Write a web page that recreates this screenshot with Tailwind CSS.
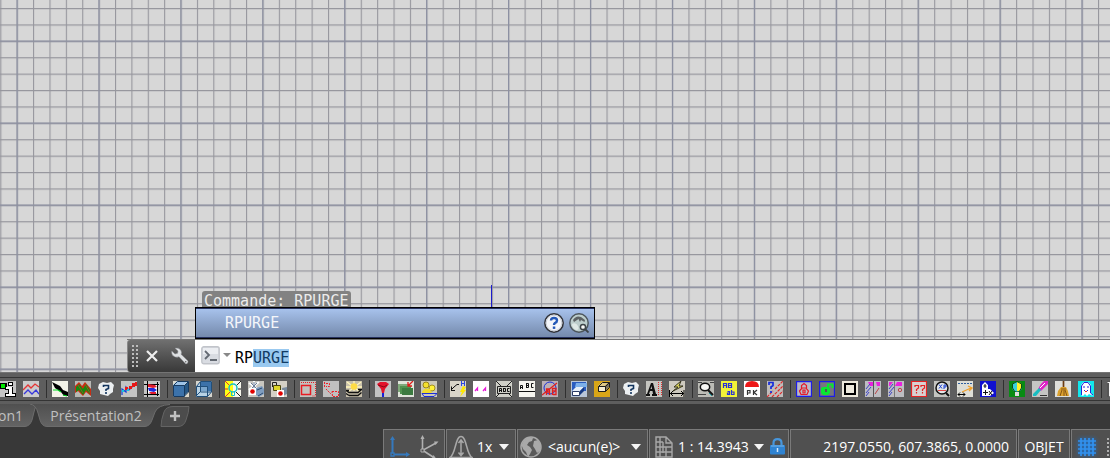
<!DOCTYPE html>
<html lang="fr">
<head>
    <meta charset="UTF-8">
    <meta name="viewport" content="width=device-width, initial-scale=1.0">
    <title>Dessin - Présentation2</title>
    <script src="https://cdn.jsdelivr.net/npm/@tailwindcss/browser@4"></script>
</head>
<body class="bg-white font-['Open_Sans',sans-serif] overflow-hidden">
<div class="flex flex-col h-screen pb-[9px]">

    <!-- Drawing area -->
    <main class="relative flex-1 min-h-0 flex flex-col justify-end bg-[#d7d7d7] overflow-hidden">
        <svg class="absolute inset-0 w-full h-full" aria-hidden="true">
            <defs>
                <pattern id="minor" width="16.384" height="16.4" x="0.3" y="8" patternUnits="userSpaceOnUse">
                    <path d="M.5 0V16.4M0 .5H16.4" stroke="#96969d" stroke-width="1.2"/>
                </pattern>
                <pattern id="major" width="81.92" height="82" x="16.5" y="40.5" patternUnits="userSpaceOnUse">
                    <path d="M.6 0V82M0 .6H82" stroke="#8c90a2" stroke-width="1.2"/>
                </pattern>
            </defs>
            <rect width="100%" height="100%" fill="url(#minor)"/>
            <rect width="100%" height="100%" fill="url(#major)"/>
        </svg>
        <div class="absolute left-[491px] bottom-[65px] w-px h-[22px] bg-[#1c1ccc]"></div>

        <!-- Command line -->
        <div class="relative pl-[127px] font-['DejaVu_Sans_Mono',monospace] text-[15px]">
            <div class="ml-[75px] w-[149px] h-4 pl-[2px] rounded-t-[3px] bg-[#828282] text-[#ececec] leading-[20px] whitespace-pre">Commande: RPURGE</div>
            <div class="relative ml-[68px] w-[400px] h-8 flex items-center pl-[29px] pr-[5px] border border-black bg-linear-to-b from-[#a9c4ee] to-[#7388aa] text-[#f4f6fa] shadow-[inset_0_1px_#25305f,inset_0_-1px_#25305f]">
                <span class="flex-1 pt-px">RPURGE</span>
                <button class="w-5 h-5 mr-[5px] -mt-px" aria-label="Aide">
                    <svg viewBox="0 0 20 20" width="20" height="20"><circle cx="10" cy="10" r="9.2" fill="#f4f6fa" stroke="#303238" stroke-width="1.5"/><circle cx="10" cy="10" r="7.8" fill="none" stroke="#c9ced6"/><path d="M7 7.6Q7 5 10 5T13 7.4Q13 9 11 10Q10 10.7 10 12" fill="none" stroke="#2459b8" stroke-width="2.4"/><path d="M8.8 13.5h2.5v2.4h-2.5z" fill="#2459b8"/></svg>
                </button>
                <button class="w-5 h-5 -mt-px" aria-label="Rechercher sur Internet">
                    <svg viewBox="0 0 20 20" width="20" height="20"><circle cx="10" cy="10" r="9.2" fill="#bccdcb" stroke="#4c555b" stroke-width="1.4"/><path d="M4 7Q7 2 12 4L16 7 15.500 9 12 7 11 9 9.500 6 5 9z" fill="#5d6264"/><path d="M3 11Q7 9 9 13T7 17Q3 15 3 11" fill="#dfe9e6"/><circle cx="14" cy="14" r="2.600" fill="#f8faf8" stroke="#3c4347" stroke-width="1.5"/><path d="M16 16l3.5 3.5" stroke="#3c4347" stroke-width="1.8"/></svg>
                </button>
            </div>
            <div class="flex h-[33px] border-t border-[#777777]">
                <div class="flex items-center w-[68px] pl-[4px] rounded-l-[3px] border-l border-[#888888] bg-linear-to-b from-[#707070] to-[#393939]">
                    <svg viewBox="0 0 6 22" width="6" height="22" fill="#bdbdbd" shape-rendering="crispEdges" aria-hidden="true"><path d="M0 0h2v2H0zM4 0h2v2H4zM0 4h2v2H0zM4 4h2v2H4zM0 8h2v2H0zM4 8h2v2H4zM0 12h2v2H0zM4 12h2v2H4zM0 16h2v2H0zM4 16h2v2H4zM0 20h2v2H0zM4 20h2v2H4z"/></svg>
                    <button class="ml-2 w-3 h-3" aria-label="Fermer">
                        <svg viewBox="0 0 12 12" width="12" height="12"><path d="M1 1l10 10M11 1L1 11" stroke="#eeeeee" stroke-width="2.2"/></svg>
                    </button>
                    <button class="ml-[13px] w-[18px] h-[18px]" aria-label="Personnaliser">
                        <svg viewBox="0 0 18 18" width="18" height="18"><path d="M4 1.2Q8 0 10 3.4 11 5.6 10 7.2L17 14Q17.4 16.5 14.8 17L8 9.7Q4.500 11.200 1.500 8.300 .2 6 .8 4L4 7 6.600 6.300 7 4z" fill="#dfe1e3" stroke="#8b8d90" stroke-width=".5"/><circle cx="14.700" cy="14.700" r=".8" fill="#666666"/></svg>
                    </button>
                </div>
                <div class="flex flex-1 items-center bg-white pl-[6px]">
                    <button class="flex items-center" aria-label="Commandes récentes">
                        <svg viewBox="0 0 31 20" width="31" height="20"><rect x=".8" y=".8" width="17.400" height="17" rx="2" fill="#d9dce2" stroke="#c1c4ca" stroke-width="1.4"/><path d="M2 2h15v6H2z" fill="#eceef2"/><path d="M4 5l4 4-4 4M9 14h7" fill="none" stroke="#636972" stroke-width="1.8"/><path d="M22 7h8l-4 4z" fill="#888888"/></svg>
                    </button>
                    <label for="cmd" class="sr-only">Commande</label>
                    <input id="cmd" value="RPURGE" spellcheck="false" autocomplete="off" class="flex-1 ml-[3px] h-7 pt-[3px] leading-[19px] text-black outline-none selection:bg-[#99c9f0] selection:text-[#123b63]">
                </div>
            </div>
        </div>
    </main>

    <!-- Tool palette -->
    <div class="pt-1 pb-[3px] bg-[#5e5e5e] border-t border-[#747474]">
        <div id="toolbar" role="toolbar" class="flex py-[2px] border-y border-[#343434]"></div>
    </div>

    <!-- Layout tabs -->
    <nav class="relative flex h-[25px] shrink-0 bg-[#383838] text-[14px] leading-[22px] text-[#c0c0c0]">
        <svg class="absolute inset-0" width="200" height="25" aria-hidden="true">
            <defs><linearGradient id="tab" x2="0" y2="1"><stop stop-color="#505050"/><stop offset="1" stop-color="#646464"/></linearGradient></defs>
            <path d="M0 0H37Q35 3 34 8L32 16Q30 22 25 22.500H0z" fill="url(#tab)"/>
            <path d="M37 0Q35 3 34 8L32 16Q30 22 25 22.500H0" fill="none" stroke="#6c6c6c"/>
            <path d="M30 0Q36 1 38 9L40 16Q42 22.500 47 22.500H145Q150 22 152 16L155 8Q158 1 170 0z" fill="url(#tab)"/>
            <path d="M30 0Q36 1 38 9L40 16Q42 22.500 47 22.500H145Q150 22 152 16L155 8Q158 1 170 .5" fill="none" stroke="#6c6c6c"/>
            <path d="M173 2.500H189Q189 8 186 16 184 22.500 178 22.500H161Q161 16 164 8 166 2.500 173 2.500z" fill="#4c4c4c" stroke="#646464"/>
        </svg>
        <button class="relative w-9 pb-px text-left"><span class="block -ml-[2px]">on1</span></button>
        <button class="relative w-[120px] pb-px">Présentation2</button>
        <button class="relative ml-[11px] w-4 h-6 flex justify-center items-center" aria-label="Nouvelle présentation">
            <svg viewBox="0 0 10 10" width="10" height="10"><path d="M5 0v10M0 5h10" stroke="#c0c0c0" stroke-width="2.4"/></svg>
        </button>
    </nav>

    <!-- Status bar -->
    <footer class="flex shrink-0 justify-end h-[29px] bg-[#383838] text-[14px] text-white overflow-hidden">
        <div class="flex flex-none gap-px w-[727px] bg-[#3e3e3e] *:flex *:items-center *:shrink-0 *:pt-[5px] *:bg-[#505050] *:border-t *:border-x *:border-[#7a7a7a] *:whitespace-nowrap">
            <div class="w-[62px] gap-[9px] pl-1">
                <button aria-label="SCU"><svg viewBox="0 0 22 24" width="22" height="24"><path d="M4.500 3v16.500H20" fill="none" stroke="#3579bd" stroke-width="2"/><path d="M2 5l2.500-4 2.500 4zM18 17l4 2.500-4 2.500z" fill="#3579bd"/><path d="M3 18h3v3H3z" fill="#505050" stroke="#3579bd" stroke-width="1.300"/></svg></button>
                <button aria-label="SCU dynamique"><svg viewBox="0 0 20 24" width="20" height="24"><path d="M3.500 2v13.500L17 8M4 15.500L14 22" fill="none" stroke="#b0b0b0" stroke-width="1.600"/><path d="M1.500 4l2-4 2 4zM15 6.500l4.500 0-3 3.500zM13 23l1.500-3 3 4z" fill="#b0b0b0"/><path d="M2 14h3v3H2z" fill="#505050" stroke="#b0b0b0"/></svg></button>
            </div>
            <div class="w-[70px] pl-[2px]">
                <button class="flex items-center gap-1"><svg viewBox="0 0 24 24" width="24" height="24" fill="none" stroke="#a8a8a8" stroke-width="1.500"><path d="M1 22.500C7 19 6 1.500 12 1.500S17 19 23 22.500zM12 6v14M9.500 8L12 5l2.500 3M9.500 17.500l2.500 3 2.500-3"/></svg>1x<svg class="ml-[3px]" viewBox="0 0 10 6" width="10" height="6"><path d="M0 0h10L5 6z" fill="#f4f4f4"/></svg></button>
            </div>
            <div class="w-[131px] pl-[2px]">
                <button class="flex items-center gap-[6px]"><svg viewBox="0 0 22 22" width="22" height="22"><circle cx="11" cy="11" r="10" fill="#5a5a5a" stroke="#a9a9a9" stroke-width="1.500"/><path d="M4 4Q9 0 13 2L12 5 9 6 7 9 10 11 12 14 10 18 8 21 6 16 3 13 1.500 9zM14 5L18 4 21 9 20 15 17 17 15 13 13 10z" fill="#a9a9a9"/></svg>&lt;aucun(e)&gt;<svg class="ml-[5px]" viewBox="0 0 10 6" width="10" height="6"><path d="M0 0h10L5 6z" fill="#f4f4f4"/></svg></button>
            </div>
            <div class="w-[140px] pl-[5px] gap-[6px]">
                <button class="flex items-center gap-[5px]"><svg viewBox="0 0 18 22" width="18" height="22" fill="none" stroke="#a8a8a8" stroke-width="1.400"><path d="M1 1h10l6 6v14H1zM11 1v6h6M5 1v20M1 6h7M1 11h16M11 11v10M1 16h16M8 6v11"/></svg>1 : 14.3943<svg viewBox="0 0 10 6" width="10" height="6"><path d="M0 0h10L5 6z" fill="#f4f4f4"/></svg></button>
                <button aria-label="Verrouiller l'échelle"><svg viewBox="0 0 15 17" width="15" height="17"><path d="M3.500 8V5Q3.500 1.200 7.500 1.200T11.500 5V8" fill="none" stroke="#4796dc" stroke-width="2.200"/><rect y="7" width="15" height="9.500" rx="1" fill="#2f83d2"/><path d="M1 8h13" stroke="#79b8ed"/><path d="M7.500 10v4" stroke="#d5e8fa" stroke-width="1.500"/></svg></button>
            </div>
            <div class="w-[227px] justify-end pr-[7px]">2197.0550, 607.3865, 0.0000</div>
            <div class="w-[52px] justify-center"><button>OBJET</button></div>
            <div class="flex-1 pl-[6px] gap-[11px]">
                <button class="drop-shadow-[0_0_2px_#1774d8]" aria-label="Grille"><svg viewBox="0 0 18 20" width="18" height="20"><path d="M3 1v18M7 1v18M11 1v18M15 1v18M0 4h18M0 8h18M0 12h18M0 16h18" stroke="#3292ef" stroke-width="1.700"/></svg></button>
                <button aria-label="Accrochage"><svg viewBox="0 0 18 20" width="18" height="20"><path d="M0 2h18M0 6h18M0 10h18M0 14h18M0 18h18" stroke="#b0b0b0" stroke-width="2" stroke-dasharray="2 2"/></svg></button>
            </div>
        </div>
    </footer>
</div>

<script>
    const bg = (c) => `<path d="M0 0h16v16H0z" fill="${c}"/>`;
    const line = (c, d, w = 1) => `<path d="${d}" fill="none" stroke="${c}" stroke-width="${w}"/>`;
    const fill = (c, d) => `<path d="${d}" fill="${c}"/>`;
    const cloud = fill("#eceff1", "M1 3L5 1 9 2 13 1 16 4 15 8 15 11 12 13 10 15 6 14 2 13 2 10 0 7z")
        + line("#12345e", "M5.500 6V4.500H10.500V7.500L8 8.500V10M8 11V13", 1.6);

    // one entry per group, every icon is [label, drawing]
    const groups = [
        [
            ["Info point", bg("#c4c4c4") + fill("#000", "M0 2h7v6H0zM8 1h5v4H8zM5 6h8v6h3v4H5v-4h3V9H5z") + fill("#00e800", "M1 3h4v4H1z") + fill("#fff", "M9 2h3v2H9zM6 6h6v7h3v2H6v-2h3V8H6z")],
            ["Profils", bg("#cbcbcb") + line("#e43434", "M0 9L5 4 8 7 12 3 16 6", 1.3) + line("#3737dc", "M1 13L5 9 9 13 13 9 16 13", 1.3)],
        ],
        [
            ["Talus", bg("#f3f3e8") + fill("#000", "M0 1L4 3 8 5 11 9 16 11V15L12 15 9 11 6 9 3 7z") + line("#00d820", "M1 9H6L9 11M11 14L15 15", 1.2)],
            ["Relief", bg("#b8b8b4") + fill("#cc2b12", "M0 5L4 1 7 5 10 1 16 8V15L11 11 8 15 3 10 0 12z") + fill("#188a10", "M1 6L4 3 8 8 11 3 15 9V13L11 9 8 14 4 9 1 11z") + line("#8c5a20", "M3 4L8 12M10 3L15 12")],
            ["Aide", cloud],
            ["Courbe", bg("#c4c4c4") + line("#1740d8", "M1 14V8L5 11V6L8 9L12 5H14", 1.2) + fill("#e81818", "M4 6h3v3H4zM8 5h3v3H8zM11 2h3v4h-3zM14 1h2v4h-2z") + fill("#13cce0", "M1 9h2v2H1zM6 8h2v2H6z")],
            ["Cadre", bg("#c4c4c4") + line("#000", "M0 3.500H15M0 13.500H15M3.500 0V16M13.500 1V15") + fill("#fff", "M4 4h9v8H4z") + fill("#e21b2d", "M4 3L11 4 13 6 9 7 4 6zM5 11H12V13H7z") + fill("#2028e0", "M4 7L10 7 13 9 10 11 5 10z")],
        ],
        [
            ["Solide", bg("#ddd9cc") + fill("#3c72aa", "M0 5h11v10H0z") + fill("#9dc3e8", "M0 4L4 0H15L11 4z") + fill("#275886", "M11 5L15 1V11L11 15z") + line("#173a60", "M.5 4.500H11.500V15.500H.5zM.5 4.500L4.500.5H15.500V11L11.500 15M11.500 4.500L15.500.5")],
            ["Vue filaire", bg("#d6d5ce") + fill("#b9d2e5", "M0 5L4 1H15V11L11 15H0z") + fill("#3c72aa", "M5 1H15V10H5z") + fill("#7ba6cd", "M5 5H11V10H5z") + line("#214f7a", "M.5 5.500H11.500V15.500H.5zM.5 5.500L4.500.5H15.500V11L11.500 15.500M4.500 1V11H15M0 15L4 11")],
        ],
        [
            ["Calque actif", bg("#f6f6ec") + fill("#ffff14", "M0 0h8v16H0z") + line("#e03030", "M0 0L5 5M0 8H3M0 16L5 11") + line("#222", "M16 0L11 5M16 16L11 11M13 8H16") + `<circle cx="8" cy="7" r="4" fill="none" stroke="#16bfc6" stroke-width="1.500"/>` + line("#16bfc6", "M6.500 11V14.500H9.500V11")],
            ["Geler le calque", bg("#c8c6c0") + line("#fff", "M6 0V11M1 2L11 9M11 1L1 9", 2) + line("#6b7d99", "M6 1V8M3 2L9 8M9 2L3 8") + fill("#7f9dc0", "M8 7L14 5 16 8V13L11 16 8 14z") + line("#2d4c70", "M9 9L14 7M10 15L15 12") + fill("#fff", "M1 7h7v7H1z") + `<circle cx="4.500" cy="10.500" r="2.300" fill="#e00000"/>`],
            ["Déverrouiller", bg("#d4d0c6") + line("#222", "M1.500 6V1.500H5.500V4") + fill("#ded629", "M3 4h6v5H3z") + line("#4c480c", "M2.500 4.500H9.500V9.500H2.500z") + fill("#77899d", "M11 7L16 6V13L12 15z") + fill("#fff", "M6 9h7v7H6z") + `<circle cx="9.500" cy="12.500" r="2.300" fill="#e00000"/>`],
        ],
        [
            ["Zone", bg("#c4c2be") + line("#e81c24", "M1.500 4.500H10.500V13.500H1.500z", 1.5) + `<path d="M1 1.500H15.500V15H12" fill="none" stroke="#e81c24" stroke-dasharray="1 1"/>`],
            ["Copie de zone", bg("#c0c0c0") + `<path d="M1.500 1V6M3 2.500H6.500V5.500H3M3 8L8 13M9 10.500H15.500V15.500H9.500z" fill="none" stroke="#ef2028" stroke-dasharray="2 1"/>`],
            ["Éclairer", bg("#c8c0ab") + line("#fff6bb", "M8 0V10M1 1L14 11M15 1L2 11M0 6H16", 1.3) + `<circle cx="8" cy="5.500" r="3.300" fill="#ffdc45"/>` + line("#111", "M0 9.500H3M12 8.500H15.500L12 11.500H3L0 9.500M3 14.500H12L15.500 11.500M0 12.500L3 14.500", 1.3)],
        ],
        [
            ["Cône", bg("#c2c2c2") + fill("#e3122b", "M2 3L5 1H11L14 3 10 8 9 12H7L6 8z") + line("#8a0716", "M3 4L9 6 12 4") + fill("#1720d6", "M7 12h2v4H7z")],
            ["Fenêtres", bg("#dfe5da") + fill("#80aa7b", "M0 3h11v8H0z") + fill("#50924f", "M2 5h11v8H2z") + fill("#3c7b40", "M4 7h11v7H4z") + line("#e11b1b", "M15 0L10 5M10 1V5H14", 1.3)],
            ["Groupe", bg("#ccc9b9") + `<circle cx="5" cy="4" r="3" fill="#f4e02e" stroke="#9a861a"/><circle cx="11" cy="7" r="3" fill="#fff23a" stroke="#a5921e"/>` + fill("#f1dd2c", "M1 11Q3 6 9 8L11 12H1z") + line("#1c2fd8", "M1 12.500H16L13 15.500H3z")],
        ],
        [
            ["Repère rapide", bg("#d8d4c8") + line("#111", "M1 9L4 6L7 3.500H9M1.500 9.500V5.500M1 9.500H5") + line("#2c46e0", "M11.500 0V5M14.500 0V5M12 2.500H15") + fill("#ffe900", "M13 5L16 6 14 9H16L10 16 12 11H10z")],
            ["Texte A A", bg("#fff") + line("#e818d8", "M2 10L4.500 7V10M4 9H5M10 10L12.500 7V10M12 9H13", 1.3)],
            ["Cadre ABC", bg("#cfcfc8") + line("#222", "M0 0L5 5M16 0L11 5M0 16L4 12M16 16L12 12M1.500 5.500H14.500V12.500H1.500z") + line("#111", "M3.500 11V7.500H5.500V11M3.500 9.500H5M7.500 7V11M7.500 7.500H9.500V10.500H7.500M13.500 7.500H11.500V10.500H13.500")],
            ["Ligne ABC", bg("#f5f4ee") + line("#111", "M1.500 8V4.500H3.500V8M1.500 6.500H3M7.500 2V7M7.500 2.500H9.500V4.500H7.500M7.500 6.500H9.500V4M14.500 2.500H12.500V6.500H14.500M0 10.500H16")],
            ["Rotation AB", bg("#b9b0b7") + `<circle cx="8" cy="7" r="6" fill="none" stroke="#1c30d8"/>` + line("#e02020", "M4.500 14V8H7.500V14M4.500 11H7M10.500 7V14M10.500 7.500H14V10H11M14 10.500V13.500H11M0 14L15 2", 1.3)],
        ],
        [
            ["Gomme bleue", bg("#b9c6d8") + fill("#2a5cc0", "M1 1h14v9H1z") + fill("#7db0ea", "M5 2h11v4H4z") + fill("#e6eef8", "M1 10L5 6H13L9 10z") + fill("#fff", "M2 10H9V14H2z") + fill("#173a82", "M9 10L13 6V10L9 14z") + line("#2b3c66", "M1.500 10.500H8.500V14.500H1.500z")],
            ["Effacer bloc", bg("#d9a617") + fill("#dfc987", "M4 5L8 1H16L11 5z") + fill("#77705e", "M11 5L15 1V6L11 10z") + fill("#f4ecd0", "M5 6H11V10H5z") + line("#1c1c1c", "M4.500 5.500H11.500V10.500H4.500zM4.500 5.500L8.500 1.500H15.500L11.500 5.500M15.500 1.500V6.500L11.500 10.500")],
        ],
        [
            ["Aide texte", cloud],
            ["Style A", bg("#c5c5c0") + fill("#111", "M0 13H1L5 2H7L10 13H11V15H6V13H7L6.500 10H4L3 13H4V15H0zM4.500 8H6L5.500 5z") + `<path d="M12.500 1V15M15.500 1V15" stroke="#e22b2b" stroke-dasharray="1 1"/>`],
            ["Cote éclair", bg("#cecabf") + fill("#e2db60", "M12 0L5 6H9L4 10L14 5H10z") + line("#35331e", "M12 0L5 6H9L4 10L14 5H10z") + line("#000", "M.5 9V16M15 9V16M1 12.500H15M4 10L1.500 12.500L4 15M12 10L14.500 12.500L12 15")],
        ],
        [
            ["Recherche", bg("#bcbcb6") + line("#444", "M0 1.500H4M12 1.500H16M0 13.500H8") + `<ellipse cx="7" cy="6" rx="4.700" ry="3.700" fill="#f8f8f5" stroke="#111" stroke-width="1.500"/>` + line("#111", "M10 9L15 14", 2) + line("#17959c", "M11 12L14 15")],
            ["AB ab", bg("#f2f238") + line("#2630d8", "M2.500 7V2.500H5.500V7M3 4.500H5M7.500 2V6.500H10.500V2.500H7.500M8 4.500H10", 1.2) + line("#2630d8", "M6.500 10.500H8.500V13.500H6.500V12H8M10.500 9V13.500H13V11H11", 1.2)],
            ["PK", bg("#fff") + fill("#ed1717", "M1 6Q1 0 8 0T15 6z") + line("#333", "M3.500 14V9.500H6V12H4M9.500 9V14M13 9L10 11.500L13 14", 1.2)],
            ["Hachures ?", bg("#bfbdbc") + `<path d="M0 16L6 10M5 16L16 5M10 16L16 10M8 8L16 0" stroke="#e02828" stroke-width="1.2" stroke-dasharray="3 1"/>` + line("#152cdc", "M2 4V1.500H6V4.500L4 6V8M4 10V12", 1.7)],
        ],
        [
            ["Verrou", bg("#b9b9c8") + line("#1c1ce8", "M.5.5H15.500V15.500H.5z", 1.3) + line("#e61a26", "M5.500 7V4.500L8 2.500L10.500 4.500V7M3.500 10L6 7H10L12.500 10L11 13.500H5zM7 9H9V12H7z", 1.2)],
            ["Ouvrir verrou", bg("#77777e") + line("#1c1ce8", "M.5.5H15.500V15.500H.5z", 1.3) + line("#08e830", "M9 7V3.500H13.500V7", 2) + fill("#08e830", "M2 7L4 6H10L11 8V12L9 14H4L2 12z") + fill("#555", "M6 8H8V11H6z")],
            ["Rectangle", bg("#edeade") + line("#000", "M3 3H13V13H3z", 2)],
            ["Découpe 1", bg("#bdbdc2") + fill("#e922de", "M3 1H8V5H5zM11 1H15V5H12z") + line("#3b42c8", "M1 8L5 3M1 12L6 6M1 15L4 11") + line("#bb4444", "M10 13L14 7") + line("#555", "M8.500 0V16")],
            ["Découpe 2", bg("#bdbdc2") + fill("#e922de", "M1 1H5L2 5H1zM9 1H14V5H7z") + line("#3b42c8", "M1 8L5 3M1 12L6 6M1 15L4 11") + `<circle cx="12" cy="9" r="1.700" fill="none" stroke="#bb4444"/>` + line("#777", "M6.500 0V16")],
            ["Inconnus", bg("#d9d0d0") + line("#e52222", "M.5.5H15.500V15.500H.5zM4 6V4.500H7.500V7L5.500 8.500V10M5.500 11V12.500M10 6V4.500H13.500V7L11.500 8.500V10M11.500 11V12.500", 1.2)],
            ["Loupe XP", bg("#c4c4c0") + `<circle cx="8" cy="7" r="6" fill="#e2e6e8" stroke="#111" stroke-width="1.500"/>` + line("#1e42d4", "M5 3.500L8 7.500M8 3.500L5 7.500M10 8V4H12V6H10") + line("#e34848", "M4 9.500H12") + line("#111", "M12 12L15 15", 2)],
            ["Décalage", bg("#deded6") + `<path d="M1 2.500H15" stroke="#2e5f9f" stroke-dasharray="2 1"/>` + line("#f0a02a", "M5 11L14 7M11 5L15 7L12 10", 1.3) + line("#000", "M1 13.500H8M3 11.500L1 13.500L3 15.500M6 11.500L8 13.500L6 15.500")],
            ["Repères +", bg("#1010cf") + fill("#fff", "M2 4L5 1 8 4V8H10L14 12 10 15H2z") + line("#111", "M5 3V7M3.500 5H6.500M5.500 9V14M3 11.500H8M9 10L12 14M12 10L9 14")],
        ],
        [
            ["Ampoule", bg("#078b13") + `<circle cx="8" cy="6" r="5" fill="#38cfda"/>` + fill("#fff02a", "M8 1L12 2 13 6 10 10H8z") + line("#0e4d18", "M3.500 3V7L6 11H10L12.500 7V3L8 .5z") + fill("#ddd", "M6 11H10V15H6z")],
            ["Stylo", bg("#c5c5c3") + fill("#df22c6", "M9 3L12 0H16V3L9 10 6 8z") + fill("#18bdc1", "M1 13L7 7 9 9 4 15H1z") + line("#333", "M8 14.500H15") + line("#fff", "M8 7L13 2")],
            ["Balai", bg("#dfdfda") + line("#6b3b11", "M8.500 0V6", 1.7) + fill("#daa12e", "M6 6H11L13 10 14 15H2L3 10z") + line("#865514", "M6 8H11M7 9L5 15M9 9V15M10 9L12 15")],
            ["Fantôme", bg("#12e8ee") + fill("#fff", "M3 14V5Q4 1 8 1T13 5V12L15 15 11 13 9 15 7 13 5 15z") + line("#2525d8", "M3.500 14V5L6 1.500H10L12.500 5V12L15 14M5 6H7M9 6H11M6 9L8 11L10 9") + line("#e22c2c", "M7 10.500H9")],
        ],
        [
            ["Table", bg("#555555") + line("#f2f2f2", "M.5 1.500H15.500M2.500 2V15H15M7.500 2V15")],
        ],
    ];

    document.getElementById("toolbar").innerHTML = groups.map((icons, i) => `
        <div class="flex shrink-0 gap-[7px] py-px pr-[7px] ${i ? "pl-[5px] border-l border-[#303030]" : ""}">
            ${icons.map(([label, art]) => `
                <button class="w-4 h-4" aria-label="${label}">
                    <svg viewBox="0 0 16 16" width="16" height="16">${art}</svg>
                </button>
            `).join("")}
        </div>
    `).join("");

    // the completed part of the command stays selected
    const cmd = document.getElementById("cmd");
    cmd.focus();
    cmd.setSelectionRange(2, 6);
</script>
</body>
</html>
